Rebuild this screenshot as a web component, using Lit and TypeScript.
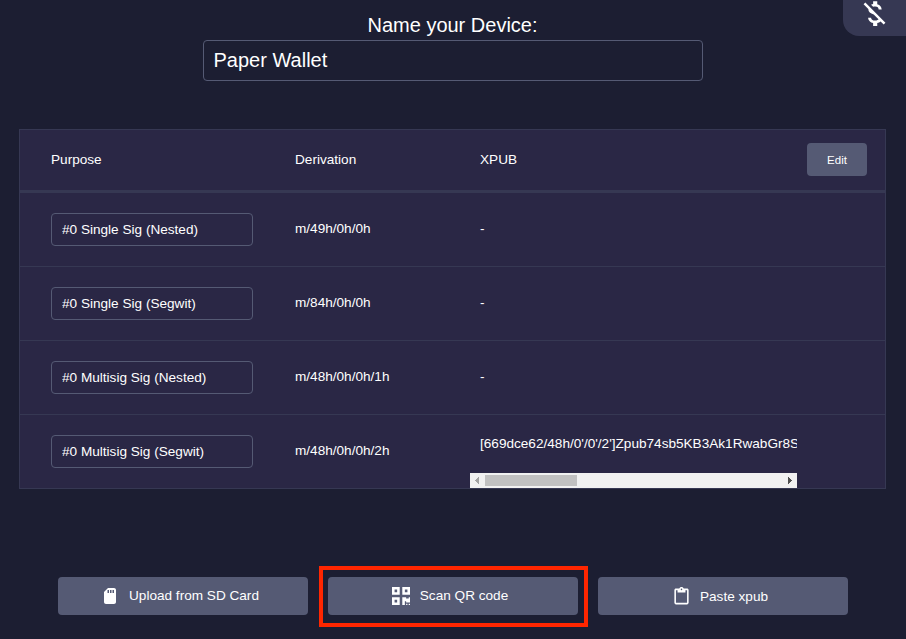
import { LitElement, html, css, svg } from "lit";
import { customElement } from "lit/decorators.js";

interface KeyRow {
  purpose: string;
  derivation: string;
  xpub: string;
}

const KEYS: KeyRow[] = [
  { purpose: "#0 Single Sig (Nested)", derivation: "m/49h/0h/0h", xpub: "-" },
  { purpose: "#0 Single Sig (Segwit)", derivation: "m/84h/0h/0h", xpub: "-" },
  { purpose: "#0 Multisig Sig (Nested)", derivation: "m/48h/0h/0h/1h", xpub: "-" },
  {
    purpose: "#0 Multisig Sig (Segwit)",
    derivation: "m/48h/0h/0h/2h",
    xpub: "[669dce62/48h/0'/0'/2']Zpub74sb5KB3Ak1RwabGr8S",
  },
];

const moneyOff = svg`<path d="M12.5 6.9c1.78 0 2.44.85 2.5 2.1h2.21c-.07-1.72-1.12-3.3-3.21-3.81V3h-3v2.16c-.53.12-1.03.3-1.48.54l1.47 1.47c.41-.17.91-.27 1.51-.27zM5.33 4.06L4.06 5.33 7.5 8.77c0 2.08 1.56 3.21 3.91 3.91l3.51 3.51c-.34.48-1.05.91-2.42.91-2.06 0-2.87-.92-2.98-2.1h-2.2c.12 2.19 1.76 3.42 3.68 3.83V21h3v-2.15c.96-.18 1.82-.55 2.45-1.12l2.22 2.22 1.27-1.27L5.33 4.06z"/>`;
const sdCard = svg`<path d="M320 0H128L0 128v320c0 35.3 28.7 64 64 64h256c35.3 0 64-28.7 64-64V64c0-35.3-28.7-64-64-64zM160 160h-48V64h48v96zm80 0h-48V64h48v96zm80 0h-48V64h48v96z"/>`;
const clipboard = svg`<path d="M19 2h-4.18C14.4.84 13.3 0 12 0c-1.3 0-2.4.84-2.82 2H5c-1.1 0-2 .9-2 2v16c0 1.1.9 2 2 2h14c1.1 0 2-.9 2-2V4c0-1.1-.9-2-2-2zm-7 0c.55 0 1 .45 1 1s-.45 1-1 1-1-.45-1-1 .45-1 1-1zm7 18H5V4h2v3h10V4h2v16z"/>`;
const qrCode = svg`<path d="M0 224h192V32H0v192zM64 96h64v64H64V96zm192-64v192h192V32H256zm128 128h-64V96h64v64zM0 480h192V288H0v192zm64-128h64v64H64v-64zm352-64h32v128h-96v-32h-32v96h-64V288h96v32h64v-32zm0 160h32v32h-32v-32zm-64 0h32v32h-32v-32z"/>`;

@customElement("app-root")
export class AppRoot extends LitElement {
  static styles = css`
    :host {
      display: flex;
      flex-direction: column;
      position: relative;
      box-sizing: border-box;
      height: 639px;
      padding: 10px 20px 0 19px;
      overflow: hidden;
      background: #1c1e32;
      color: #fff;
      font: 13.6px/16px "Liberation Sans", Arial, sans-serif;
    }
    * {
      box-sizing: border-box;
    }
    svg {
      display: block;
      fill: currentColor;
      flex: none;
    }
    input {
      font: inherit;
      color: inherit;
      background: none;
      border: 1px solid #555a74;
      border-radius: 4px;
      outline: none;
      margin: 0;
    }
    button {
      font: inherit;
      color: inherit;
      background: #555a74;
      border: 0;
      border-radius: 4px;
      padding: 0;
    }
    .price-toggle {
      position: absolute;
      top: 0;
      right: 0;
      width: 63px;
      height: 36px;
      border-bottom-left-radius: 16px;
      background: #363853;
      display: flex;
      align-items: flex-end;
      padding: 0 0 6px 15px;
    }
    .name {
      display: flex;
      flex-direction: column;
      align-items: center;
      font-size: 20px;
      line-height: 30px;
    }
    .name input {
      width: 500px;
      height: 41px;
      padding: 0 10px;
    }
    .keys {
      margin-top: 48px;
      height: 360px;
      border: 1px solid #363853;
      background: #2a2745;
    }
    .row {
      display: grid;
      grid-template-columns: 244px 175px 327px 1fr;
      align-items: center;
      height: 74px;
      padding-left: 31px;
      border-bottom: 1px solid #363853;
    }
    .row:last-child {
      border-bottom: 0;
      height: 73px;
    }
    .head {
      height: 63px;
      border-bottom-width: 3px;
    }
    .row input {
      width: 202px;
      height: 33px;
      padding: 0 10px;
    }
    .path {
      padding-bottom: 2px;
    }
    .xpub {
      padding-left: 10px;
    }
    .cell {
      padding: 0 0 2px 10px;
    }
    .scroll {
      height: 100%;
      display: flex;
      flex-direction: column;
      justify-content: space-between;
      padding-top: 21px;
      overflow: hidden;
      white-space: nowrap;
    }
    .bar {
      display: flex;
      align-items: center;
      height: 15px;
      background: #f1f1f1;
      color: #505050;
    }
    .bar .off {
      color: #a3a3a3;
    }
    .thumb {
      width: 92px;
      height: 11px;
      background: #c1c1c1;
      margin-right: auto;
    }
    .edit {
      width: 60px;
      height: 33px;
      margin: 0 0 1px 10px;
      font-size: 11.5px;
    }
    .actions {
      display: flex;
      align-items: flex-start;
      margin: 77px 0 0 39px;
    }
    .actions button {
      display: flex;
      align-items: center;
      justify-content: center;
      width: 250px;
      height: 38px;
      padding-right: 6px;
    }
    .actions .sd,
    .actions .paste {
      margin-top: 11px;
    }
    .marked {
      border: 4px solid #ff2600;
      padding: 7px 6px 8px 5px;
      margin: 0 10px 0 11px;
    }
    .actions .sd {
      gap: 13px;
      padding-right: 3px;
    }
    .qr {
      gap: 10px;
    }
    .paste {
      gap: 9px;
    }
    .paste span {
      padding-top: 2px;
    }
  `;

  private icon(shape: unknown, width: number, height = width, box = "0 0 24 24") {
    return html`<svg width=${width} height=${height} viewBox=${box}>${shape}</svg>`;
  }

  private arrow(points: string, cls: string) {
    return html`<svg class=${cls} width="15" height="15" viewBox="0 0 15 15" shape-rendering="crispEdges"><polygon points=${points} /></svg>`;
  }

  private xpub(value: string) {
    if (value === "-") return html`<div class="cell">-</div>`;
    return html`<div class="scroll">
      <div class="xpub">${value}</div>
      <div class="bar">
        ${this.arrow("5,7.5 9,3.5 9,11.5", "off")}
        <div class="thumb"></div>
        ${this.arrow("10,7.5 6,3.5 6,11.5", "on")}
      </div>
    </div>`;
  }

  render() {
    return html`
      <div class="price-toggle">${this.icon(moneyOff, 33)}</div>
      <label class="name">Name your Device:<input .value=${"Paper Wallet"} /></label>
      <section class="keys">
        <div class="row head">
          <div>Purpose</div>
          <div>Derivation</div>
          <div class="xpub">XPUB</div>
          <button class="edit">Edit</button>
        </div>
        ${KEYS.map(
          (k) => html`<div class="row">
            <input .value=${k.purpose} />
            <div class="path">${k.derivation}</div>
            ${this.xpub(k.xpub)}
          </div>`
        )}
      </section>
      <div class="actions">
        <button class="sd">${this.icon(sdCard, 12, 16, "0 0 384 512")}<span>Upload from SD Card</span></button>
        <div class="marked">
          <button class="qr">${this.icon(qrCode, 18, 18, "0 32 448 448")}<span>Scan QR code</span></button>
        </div>
        <button class="paste">${this.icon(clipboard, 19)}<span>Paste xpub</span></button>
      </div>
    `;
  }
}
